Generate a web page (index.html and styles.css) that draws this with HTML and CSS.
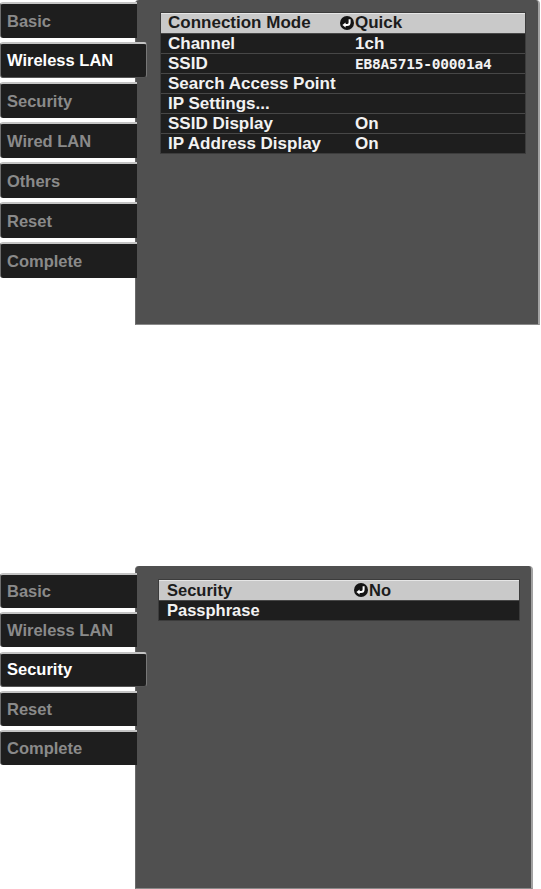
FILE: index.html
```html
<!DOCTYPE html>
<html lang="en">
<head>
  <meta charset="UTF-8" />
  <meta name="viewport" content="width=device-width, initial-scale=1.0"/>
  <title>Network Settings</title>
  <link rel="stylesheet" href="styles.css">
</head>
<body>
  <!-- Wireless LAN screen -->
  <div class="screen screen-wlan">
    <div class="tabs">
      <div class="tab">Basic</div>
      <div class="tab active">Wireless LAN</div>
      <div class="tab">Security</div>
      <div class="tab">Wired LAN</div>
      <div class="tab">Others</div>
      <div class="tab">Reset</div>
      <div class="tab">Complete</div>
    </div>
    <div class="panel">
      <div class="menu">
        <div class="row selected">
          <span class="label">Connection Mode</span>
          <span class="val"><svg class="enter" viewBox="0 0 14 14"><circle cx="7" cy="7" r="7"/><path d="M9.6 3.2v3.3a2.6 2.6 0 0 1-2.6 2.6H4.6"/><path class="head" d="M2.4 9.1l3.2-2.5v5z"/></svg>Quick</span>
        </div>
        <div class="row">
          <span class="label">Channel</span>
          <span class="val plain">1ch</span>
        </div>
        <div class="row">
          <span class="label">SSID</span>
          <span class="val plain mono">EB8A5715-00001a4</span>
        </div>
        <div class="row">
          <span class="label">Search Access Point</span>
          <span class="val"></span>
        </div>
        <div class="row">
          <span class="label">IP Settings...</span>
          <span class="val"></span>
        </div>
        <div class="row">
          <span class="label">SSID Display</span>
          <span class="val plain">On</span>
        </div>
        <div class="row">
          <span class="label">IP Address Display</span>
          <span class="val plain">On</span>
        </div>
      </div>
    </div>
  </div>

  <!-- Security screen -->
  <div class="screen screen-sec">
    <div class="tabs">
      <div class="tab">Basic</div>
      <div class="tab">Wireless LAN</div>
      <div class="tab active">Security</div>
      <div class="tab">Reset</div>
      <div class="tab">Complete</div>
    </div>
    <div class="panel">
      <div class="menu">
        <div class="row selected">
          <span class="label">Security</span>
          <span class="val"><svg class="enter" viewBox="0 0 14 14"><circle cx="7" cy="7" r="7"/><path d="M9.6 3.2v3.3a2.6 2.6 0 0 1-2.6 2.6H4.6"/><path class="head" d="M2.4 9.1l3.2-2.5v5z"/></svg>No</span>
        </div>
        <div class="row">
          <span class="label">Passphrase</span>
          <span class="val"></span>
        </div>
      </div>
    </div>
  </div>
</body>
</html>
```

FILE: styles.css
```css
body {
  margin: 0;
  background: #fff;
  font-family: "Liberation Sans", Arial, sans-serif;
  font-weight: bold;
}

.screen {
  display: flex;
  align-items: flex-start;
}

.tabs {
  width: 135px;
  flex-shrink: 0;
  display: flex;
  flex-direction: column;
  position: relative;
  z-index: 1;
}

.tab {
  box-sizing: border-box;
  width: 137px;
  background: #1e1e1e;
  color: #8a8a8a;
  border-top: 2px solid #c4c4c4;
  border-left: 1px solid #6e6e6e;
  border-radius: 3px 0 0 3px;
  padding-left: 6px;
  display: flex;
  align-items: center;
  font-size: 16.5px;
}

.tab.active {
  width: 147px;
  color: #fff;
  border-right: 1px solid #777;
  border-bottom: 1px solid #555;
  border-radius: 3px;
}

.panel {
  box-sizing: border-box;
  background: #505050;
  border-right: 2px solid #a2a2a2;
  border-bottom: 1px solid #8a8a8a;
  border-left: 1px solid #6a6a6a;
  border-radius: 4px 4px 0 0;
}

.menu {
  background: #1e1e1e;
  border: 1px solid #3c3c3c;
}

.row {
  display: flex;
  align-items: center;
  height: 19px;
  border-top: 1px solid #474747;
  color: #f2f2f2;
  white-space: nowrap;
}

.row:first-child {
  border-top: none;
  height: 20px;
}

.row.selected {
  background: #c9c9c9;
  color: #1c1c1c;
  box-shadow: inset 0 1px 0 #e6e6e6;
}

.label {
  flex-shrink: 0;
}

.val {
  display: flex;
  align-items: center;
}

.val.plain {
  padding-left: 15px;
}

.mono {
  font-family: "DejaVu Sans Mono", monospace;
  font-weight: bold;
  font-size: 14.5px;
  letter-spacing: -0.2px;
}

.enter {
  width: 14px;
  height: 14px;
  margin-right: 1px;
}

.enter circle {
  fill: #141414;
}

.enter path {
  fill: none;
  stroke: #fff;
  stroke-width: 2;
}

.enter path.head {
  fill: #fff;
  stroke: none;
}

/* wireless lan screen */
.screen-wlan .tabs {
  padding-top: 2px;
  gap: 4px;
}

.screen-wlan .tab {
  height: 36px;
}

.screen-wlan .panel {
  width: 405px;
  height: 325px;
  padding: 12px 0 0 24px;
}

.screen-wlan .menu {
  width: 364px;
  font-size: 17px;
}

.screen-wlan .label {
  width: 172px;
  padding-left: 7px;
}

/* security screen */
.screen-sec {
  margin-top: 241px;
}

.screen-sec .tabs {
  padding-top: 7px;
  gap: 4.3px;
}

.screen-sec .tab {
  height: 35px;
}

.screen-sec .panel {
  width: 398px;
  height: 323px;
  padding: 13px 0 0 22px;
}

.screen-sec .menu {
  width: 360px;
  font-size: 16.5px;
}

.screen-sec .label {
  width: 187px;
  padding-left: 8px;
}
```
